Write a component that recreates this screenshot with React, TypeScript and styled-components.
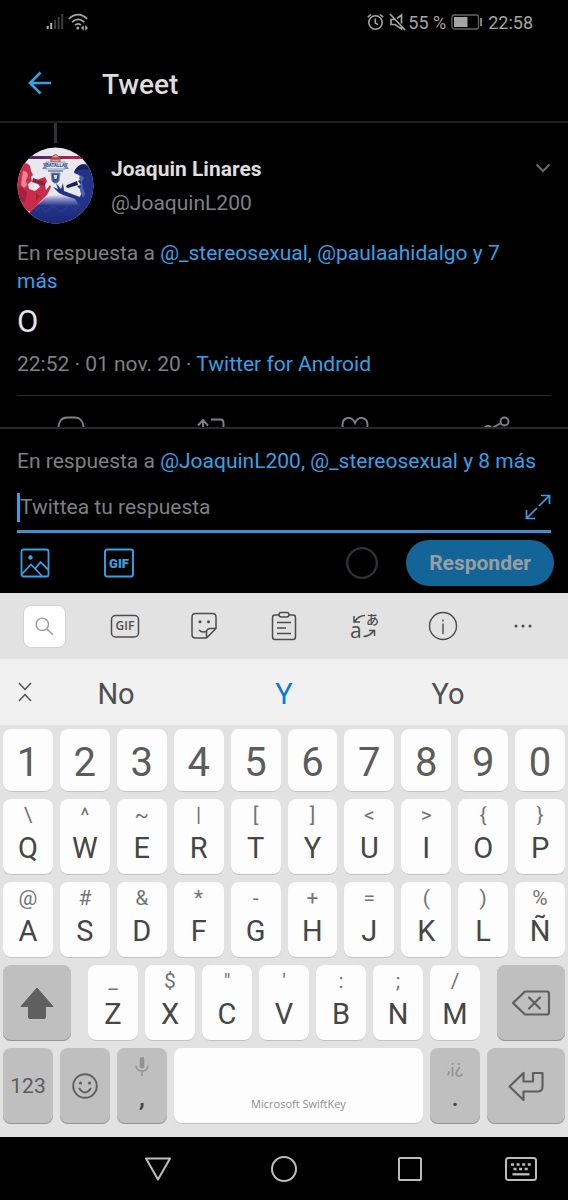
import React from "react";
import styled, { createGlobalStyle } from "styled-components";

const BLUE = "#35a1e8";
const GREY = "#7d8084";
const KEY_INK = "#5c5c5c";

const GlobalStyle = createGlobalStyle`
  * { box-sizing: border-box; }
  body { margin: 0; background: #000; font-family: Roboto, "Noto Sans CJK JP", sans-serif; }
  button { border: 0; padding: 0; background: none; font: inherit; color: inherit; display: flex; align-items: center; justify-content: center; }
  svg { display: block; flex: none; }
  h1, h2, p { margin: 0; }
`;

const Screen = styled.div`
  display: flex;
  flex-direction: column;
  min-height: 100vh;
  background: #000;
`;

const StatusBar = styled.header`
  display: flex;
  align-items: center;
  height: 44px;
  padding: 0 35px 0 46px;
  color: #a4a4a4;
  font-size: 18px;
`;
const StatusLeft = styled.div`
  display: flex;
  gap: 4px;
  margin-right: auto;
`;
const StatusRight = styled.div`
  display: flex;
  align-items: center;
  gap: 5px;
`;
const Percent = styled.span`
  margin-left: -3px;
`;

const AppBar = styled.div`
  display: flex;
  align-items: center;
  height: 79px;
  padding: 0 26px;
  gap: 48px;
  border-bottom: 2px solid #1d1f20;
`;
const Title = styled.h1`
  padding-top: 4px;
  font-size: 28px;
  font-weight: 500;
  line-height: 36px;
  color: #dcdcdc;
`;

const Thread = styled.main`
  flex: 1 1 304px;
  height: 304px;
  overflow: hidden;
  display: flex;
  flex-direction: column;
  padding: 0 17px;
  & > * { flex-shrink: 0; }
`;
const ThreadLine = styled.div`
  width: 3px;
  height: 20px;
  margin: 0 0 4px 37px;
  background: #303336;
`;
const Author = styled.div`
  display: flex;
  height: 76px;
  gap: 17px;
`;
const AuthorNames = styled.div`
  flex: 1;
  padding-top: 4px;
`;
const Name = styled.h2`
  font-size: 21px;
  font-weight: 700;
  line-height: 36px;
  color: #dedede;
`;
const Handle = styled.p`
  font-size: 21px;
  line-height: 32px;
  color: ${GREY};
`;
const MoreButton = styled.button`
  align-self: flex-start;
  height: 42px;
`;
const Meta = styled.p`
  font-size: 21px;
  line-height: 28px;
  color: ${GREY};
`;
const ReplyingTo = styled(Meta)`
  margin-top: 16px;
  padding-right: 24px;
`;
const Link = styled.a`
  color: ${BLUE};
  text-decoration: none;
`;
const TweetText = styled.p`
  margin: 6px 0 7px;
  font-size: 31px;
  line-height: 42px;
  color: #e4e4e4;
`;
const Actions = styled.div`
  display: grid;
  grid-template-columns: repeat(4, 1fr);
  margin: 0 -17px;
  padding-top: 19px;
`;
const Rule = styled.hr`
  width: 100%;
  margin: 17px 0 0;
  border: 0;
  border-top: 1px solid #2b2d2e;
`;

const Composer = styled.form`
  padding: 18px 17px 0;
  border-top: 2px solid #27292b;
  background: #000;
`;
const InputRow = styled.div`
  display: flex;
  align-items: center;
  height: 54px;
  margin-top: 4px;
  padding-top: 5px;
  border-bottom: 3px solid #3f8fd0;
`;
const Caret = styled.span`
  width: 3px;
  height: 29px;
  background: ${BLUE};
`;
const ReplyInput = styled.input`
  flex: 1;
  min-width: 0;
  padding: 0;
  border: 0;
  outline: 0;
  background: none;
  color: #e4e4e4;
  font: 21px/28px Roboto, sans-serif;
  &::placeholder { color: ${GREY}; opacity: 1; }
`;
const ComposerTools = styled.div`
  display: flex;
  align-items: center;
  height: 60px;
  padding-left: 3px;
`;
const ToolButton = styled.button<{ $after: number }>`
  margin-right: ${(p) => p.$after}px;
`;
const Spacer = styled.span`
  flex: 1;
`;
const SubmitButton = styled.button`
  && {
    height: 46px;
    margin: 0 -3px 0 28px;
    padding: 0 23px;
    border-radius: 23px;
    background: #136497;
    color: #979fa5;
    font-size: 21px;
    font-weight: 700;
  }
`;

const Keyboard = styled.section`
  background: #e2e2e2;
  padding-bottom: 13px;
`;
const KeyboardTools = styled.div`
  display: grid;
  grid-template-columns: repeat(7, 1fr);
  height: 66px;
  padding: 0 5px;
  color: #4c4c4c;
`;
const SearchBox = styled.span`
  display: flex;
  align-items: center;
  justify-content: center;
  width: 43px;
  height: 43px;
  border: 1px solid #d2d2d2;
  border-radius: 8px;
  background: #fff;
`;
const Suggestions = styled.div`
  display: grid;
  grid-template-columns: 32px 168fr 168fr 160fr 40px;
  height: 66px;
  background: #f1f1f1;
`;
const Suggestion = styled.button<{ $active?: boolean }>`
  && {
    font-size: 29px;
    color: ${(p) => (p.$active ? "#0a78dc" : "#505050")};
    padding-top: 3px;
  }
`;
const CollapseButton = styled.button`
  && { padding-left: 17px; }
`;

const Keys = styled.div`
  display: grid;
  gap: 7px;
  padding: 4px 3px 0;
`;
const KeyRow = styled.div<{ $columns?: string; $height?: number }>`
  display: grid;
  grid-template-columns: ${(p) => p.$columns ?? "repeat(10, minmax(0, 1fr))"};
  column-gap: 7px;
  height: ${(p) => p.$height ?? 76}px;
`;
const Key = styled.button<{ $dark?: boolean }>`
  && {
    flex-direction: column;
    justify-content: ${(p) => (p.$dark ? "center" : "flex-start")};
    min-width: 0;
    border-radius: 8px;
    background: ${(p) => (p.$dark ? "#bfbfbf" : "#fdfdfd")};
    box-shadow: inset 0 -1px 0 ${(p) => (p.$dark ? "#949494" : "#c2c2c2")};
    color: ${KEY_INK};
    font-size: 21px;
  }
`;
const DigitKey = styled(Key)`
  && {
    justify-content: center;
    padding-top: 3px;
    font-size: 40px;
  }
`;
const Hint = styled.span`
  font-size: 21px;
  line-height: 32px;
  color: #757575;
`;
const Letter = styled.span`
  font-size: 29px;
  line-height: 34px;
  color: #464646;
`;
const StackKey = styled(Key)`
  && { justify-content: flex-start; }
`;
const SoftHint = styled.span`
  display: flex;
  align-items: center;
  justify-content: center;
  height: 36px;
  font-size: 18px;
  color: #929292;
`;
const Punctuation = styled.span`
  font-size: 26px;
  font-weight: 500;
  line-height: 26px;
  color: #464646;
`;
const SpaceKey = styled(Key)`
  && {
    justify-content: flex-end;
    padding-bottom: 12px;
    font: 11px/16px "Open Sans", sans-serif;
    color: #8d8d8d;
  }
`;

const NavBar = styled.nav`
  display: grid;
  grid-template-columns: 95fr 126fr 126fr 126fr 95fr;
  height: 63px;
  background: #000;
  button:first-child { grid-column: 2; }
`;

const SignalIcon = () => (
  <svg width="18" height="18" viewBox="0 0 18 18">
    <path d="M1.7 13v3M5.2 10v6" stroke="#b0b0b0" strokeWidth="2" />
    <path d="M9 7v9M12.6 4v12M16.2 1v15" stroke="#3c3c3c" strokeWidth="2" />
  </svg>
);
const WifiIcon = () => (
  <svg width="21" height="18" viewBox="0 0 21 18" fill="none" stroke="#a8a8a8" strokeWidth="1.7">
    <path d="M.8 5.8Q10 -2.5 19.2 5.8M4 9.2Q10 3.8 16.2 9M7 12.2Q10 9.5 13 12" />
    <circle cx="9.8" cy="15" r="1.5" fill="#a8a8a8" stroke="none" />
    <path d="M15.8 12.200 13 15l2.800 2.800zM17.200 12.200l2.800 2.800-2.800 2.800z" fill="#a8a8a8" stroke="none" />
  </svg>
);
const AlarmIcon = () => (
  <svg width="17" height="18" viewBox="0 0 17 18" fill="none" stroke="#a4a4a4" strokeWidth="1.6">
    <circle cx="8.500" cy="9.500" r="6.700" />
    <path d="M8.300 5.500v4.500l2.800 1.600M.8 4.200 4 1.500M16.200 4.200 13 1.500" />
  </svg>
);
const MuteIcon = () => (
  <svg width="17" height="18" viewBox="0 0 17 18" fill="none" stroke="#a4a4a4" strokeWidth="1.700">
    <path d="M1 1 16 17M5.500 6.500H2v5h4l6.500 4.500v-3M8 5.500 12.500 2v8.500" />
  </svg>
);
const BatteryIcon = () => (
  <svg width="32" height="16" viewBox="0 0 32 16">
    <rect x="1" y="1" width="26.500" height="14" rx="2" fill="none" stroke="#666" strokeWidth="1.300" />
    <rect x="3" y="3" width="13.500" height="10" fill="#a4a4a4" />
    <path d="M30 4v8" stroke="#8c8c8c" strokeWidth="1.800" />
  </svg>
);
const BackIcon = () => (
  <svg width="28" height="24" viewBox="0 0 28 24" fill="none" stroke={BLUE} strokeWidth="2.600">
    <path d="M25 12H4M14.500 1.500 4 12l10.500 10.500" />
  </svg>
);
const ChevronIcon = () => (
  <svg width="16" height="12" viewBox="0 0 16 12" fill="none" stroke="#64686b" strokeWidth="2.200">
    <path d="m1.500 2.500 6.500 6.500 6.500-6.500" />
  </svg>
);

const Avatar = () => (
  <svg width="77" height="77" viewBox="0 0 77 77" role="img" aria-label="Joaquin Linares">
    <defs>
      <clipPath id="round"><circle cx="38.500" cy="38.500" r="38" /></clipPath>
      <linearGradient id="crowd" x1="0" y1="0" x2="0" y2="1">
        <stop offset="0" stopColor="#e8e8f2" />
        <stop offset=".15" stopColor="#8790c4" />
        <stop offset=".38" stopColor="#263489" />
        <stop offset="1" stopColor="#1b2878" />
      </linearGradient>
      <linearGradient id="band" x1="0" y1="0" x2="1" y2="0">
        <stop offset=".15" stopColor="#40256f" />
        <stop offset=".8" stopColor="#c31d50" />
      </linearGradient>
    </defs>
    <g clipPath="url(#round)">
      <rect width="77" height="77" fill="#e9e8ec" />
      <rect y="9" width="77" height="3" fill="url(#band)" />
      <path d="M12 66 28 51Q40 45 56 50l21 6v21H0V66z" fill="url(#crowd)" />
      <path d="M0 26 5 18q5-4 8 1l1 5 2 4-2 2 1 4-4 3 1 5 6 2 5-4-3-5 2-3 6-2 2 4-2 4 1 5 4-5 1 2-4 8-7 7-9 10L0 60z" fill="#c92c4b" />
      <path d="M6 24q5 0 5 5l-2 4 1 5-3 3-3-3z" fill="#e98593" />
      <path d="M3 38 10 45 8 56 0 52zM19 46l4 3-4 5z" fill="#a8203f" />
      <path d="m16 31 9 3 3 1v4l-4-1-9-3z" fill="#8d213e" />
      <path d="M57 26q2-7 8-9 9-1 12 8v45l-13-9-6-9-12-4-4-2-6-6 5 2-2-6 5 6 2-6 1 8 8 3 8 3 2-6-5-5 4-1-3-4 3-2-2-4z" fill="#223489" />
      <path d="m50 38 10-4 1 4-10 3-2-1z" fill="#1a2256" />
      <path d="m64 28 3 3-2 4 1 6 2 6-2 4-3-7 1-9-2-4z" fill="#5261a8" />
      <path d="M57 25q3-7 10-7 4 1 5 5-7-2-15 2z" fill="#162155" />
      <path d="M34 12q4.500-9 9 0v3h-9z" fill="#d6ab84" stroke="#a8444d" strokeWidth="1" />
      <path d="M35 11.500h7" stroke="#b92b40" strokeWidth="2" />
      <path d="M26 16h4l-1 6h-4l2-3zM47 16h4l-1 3 2 3h-4z" fill="#7787ad" />
      <path d="M29 15h19v7H29z" fill="#dfe4ef" stroke="#6c80ab" strokeWidth=".7" />
      <text x="38.500" y="20" textAnchor="middle" fontFamily="Roboto, sans-serif" fontSize="4.500" fontWeight="700" fill="#304a82">BATALLA</text>
      <path d="M31 24h15" stroke="#6b7ba6" strokeWidth="1.500" />
      <path d="M34 26h9l-1 8-2 2h-3l-2-2z" fill="#34518b" stroke="#8492b3" strokeWidth="1" />
      <path d="M36.500 28h4l-1 4h-2z" fill="#c7d2e8" />
      <path d="m18 64 6-4 5 5 7-6 8 6 8-7 8 6" fill="none" stroke="#35489a" strokeWidth="1.500" opacity=".4" />
    </g>
  </svg>
);

const ActionCell = styled.button`
  height: 30px;
`;
const actionPaths: Record<string, React.ReactNode> = {
  Responder: <path d="M3.500 13C3.500 7 6.500 2.500 12 2.500h8c5.500 0 8.500 4.500 8.500 10.500s-6 10-12.500 14v-4C7.500 23 3.500 19 3.500 13z" />,
  Retwittear: <path d="M6 22V5M1 10.500l5-5.500 5 5.500M14 4.500h9q3.500 0 3.500 3.500V22M22 18l5 5 5-5" />,
  "Me gusta": <path d="M16 27C8 21 3.500 15 3.500 10c0-8 9-10 12.500-2 3.500-8 12.500-6 12.500 2 0 5-4.500 11-12.500 17z" />,
  Compartir: (
    <>
      <circle cx="23.500" cy="6.500" r="4" />
      <circle cx="7" cy="15" r="4" />
      <circle cx="23.500" cy="23.500" r="4" />
      <path d="m19.500 8.500-8.500 4.500M11 17l9 5" />
    </>
  ),
};

const ImageIcon = () => (
  <svg width="30" height="30" viewBox="0 0 30 30" fill="none" stroke={BLUE} strokeWidth="1.800">
    <rect x="1.500" y="1.500" width="27" height="27" rx="2" />
    <path d="M2 26 11 16.500 22 28M15 21l5.500-7 8 8" />
    <circle cx="10.500" cy="9.500" r="2.200" fill={BLUE} stroke="none" />
  </svg>
);
const GifIcon = ({ bold }: { bold?: boolean }) => (
  <svg width="30" height="30" viewBox="0 0 30 30" fill="none">
    {bold ? (
      <rect x="1" y="1.500" width="28" height="27" rx="2" stroke={BLUE} strokeWidth="1.900" />
    ) : (
      <rect x="1.500" y="4.500" width="27" height="21.500" rx="4" stroke="#4c4c4c" strokeWidth="1.500" />
    )}
    <text
      x="15"
      y={bold ? 20 : 19}
      textAnchor="middle"
      fontFamily={bold ? "Roboto, sans-serif" : "Open Sans, sans-serif"}
      fontSize={bold ? 13 : 12}
      fontWeight={bold ? 900 : 600}
      fill={bold ? BLUE : "#4c4c4c"}
    >
      GIF
    </text>
  </svg>
);
const ExpandIcon = () => (
  <svg width="26" height="26" viewBox="0 0 26 26" fill="none" stroke={BLUE} strokeWidth="1.700">
    <path d="M14 12 24 2M16 1.500h8.500V10M12 14 2 24M1.500 16v8.500H10" />
  </svg>
);
const CountRing = () => (
  <svg width="32" height="32" viewBox="0 0 32 32">
    <circle cx="16" cy="16" r="14.800" fill="none" stroke="#303336" strokeWidth="2.300" />
  </svg>
);

const SearchIcon = () => (
  <svg width="19" height="19" viewBox="0 0 19 19" fill="none" stroke="#9b9b9b" strokeWidth="1.400">
    <circle cx="7.300" cy="7.300" r="6.200" />
    <path d="m12 12 6 6" />
  </svg>
);
const StickerIcon = () => (
  <svg width="28" height="28" viewBox="0 0 28 28" fill="none" stroke="#4c4c4c" strokeWidth="1.500">
    <path d="M16.500 26H5.500q-3.500 0-3.500-3.500V5Q2 1.500 5.500 1.500h17q3.500 0 3.500 3.500v11.500zM16.500 26v-5.500q0-4 4-4H26M9 18q3.500 3.500 8 1" />
    <circle cx="10" cy="9.800" r="1.500" fill="#4c4c4c" stroke="none" />
    <circle cx="18.500" cy="9.800" r="1.500" fill="#4c4c4c" stroke="none" />
  </svg>
);
const ClipboardIcon = () => (
  <svg width="26" height="30" viewBox="0 0 26 30" fill="none" stroke="#4c4c4c" strokeWidth="1.500">
    <path d="M8 4H4Q1.500 4 1.500 6.500v19Q1.500 28.500 4 28.500h18q2.500 0 2.500-3v-19Q24.500 4 22 4h-4" />
    <rect x="8" y="1.500" width="10" height="4.500" rx="2.200" />
    <path d="M6 11.500h14M6 17h9M6 22.500h14" />
  </svg>
);
const TranslateIcon = () => (
  <svg width="40" height="40" viewBox="0 0 40 40" fill="none" stroke="#4c4c4c" strokeWidth="1.500">
    <text x="6" y="32" fontFamily="Open Sans, sans-serif" fontSize="21" fill="#4c4c4c" stroke="none">a</text>
    <text x="22" y="18" fontFamily="Noto Sans CJK JP, sans-serif" fontSize="13" fontWeight="500" fill="#4c4c4c" stroke="none">あ</text>
    <path d="M21 9.500q-6 0-10.500 6M10 10v6h6M19.500 30.500q6 0 10.500-6M25 24.500h5.500V30" />
  </svg>
);
const InfoIcon = () => (
  <svg width="30" height="30" viewBox="0 0 30 30" fill="none" stroke="#4c4c4c" strokeWidth="1.400">
    <circle cx="15" cy="15" r="13.500" />
    <path d="M15 12.500V23M15 8.500v2" />
  </svg>
);
const MoreIcon = () => (
  <svg width="20" height="6" viewBox="0 0 20 6" fill="#4c4c4c">
    <circle cx="3" cy="3" r="1.500" />
    <circle cx="10" cy="3" r="1.500" />
    <circle cx="17" cy="3" r="1.500" />
  </svg>
);
const CollapseIcon = () => (
  <svg width="14" height="20" viewBox="0 0 14 20" fill="none" stroke="#4c4c4c" strokeWidth="1.400">
    <path d="m1 1 6 6.500L13 1M1 19l6-6.500 6 6.500" />
  </svg>
);
const ShiftIcon = () => (
  <svg width="36" height="34" viewBox="0 0 36 34">
    <path d="M18 2 34 20.500h-7.500V31q0 1.500-1.500 1.500H11Q9.500 32.500 9.500 31V20.500H2z" fill="#5f5f5f" stroke="#5f5f5f" strokeLinejoin="round" />
  </svg>
);
const BackspaceIcon = () => (
  <svg width="40" height="26" viewBox="0 0 40 26" fill="none" stroke="#5f5f5f" strokeWidth="2.200" strokeLinejoin="round" strokeLinecap="round">
    <path d="M2 13 14 1.500h22q2 0 2 2v19q0 2-2 2H14zM18 7.500 29 18.500M29 7.500 18 18.500" />
  </svg>
);
const EnterIcon = () => (
  <svg width="36" height="30" viewBox="0 0 36 30" fill="none" stroke="#5f5f5f" strokeWidth="2.200" strokeLinejoin="round">
    <path d="M1.500 15.500 15.500 2v8.500H25V2h9.500v13.500q0 5-5 5h-14V29z" />
  </svg>
);
const SmileIcon = () => (
  <svg width="26" height="26" viewBox="0 0 26 26" fill="none" stroke="#5f5f5f" strokeWidth="1.900">
    <circle cx="13" cy="13" r="11.800" />
    <path d="M7 15q6 9 12 0" />
    <circle cx="8.500" cy="10" r="1.600" fill="#5f5f5f" stroke="none" />
    <circle cx="17.500" cy="10" r="1.600" fill="#5f5f5f" stroke="none" />
  </svg>
);
const MicIcon = () => (
  <svg width="14" height="20" viewBox="0 0 14 20" fill="none" stroke="#929292" strokeWidth="1.500">
    <rect x="4.700" y="1" width="4.600" height="11.500" rx="2.300" fill="#929292" stroke="none" />
    <path d="M1.200 9.500q0 5.500 5.800 5.500t5.800-5.500M7 15v5" />
  </svg>
);
const navStroke = { fill: "none", stroke: "#bcbcbc", strokeWidth: 2 };
const NavKeyboardIcon = () => (
  <svg width="32" height="24" viewBox="0 0 32 24">
    <rect x="1" y="1" width="30" height="22" rx="2.500" {...navStroke} />
    <path d="M6 7.500h20" stroke="#bcbcbc" strokeWidth="2.300" strokeDasharray="3 2.600" />
    <path d="M8.500 12h15" stroke="#bcbcbc" strokeWidth="2.300" strokeDasharray="3 2.600" />
    <path d="M7.500 17.300h17" stroke="#bcbcbc" strokeWidth="2.300" />
  </svg>
);

const digits = ["1", "2", "3", "4", "5", "6", "7", "8", "9", "0"];
const topRow = ["\\Q", "^W", "~E", "|R", "[T", "]Y", "<U", ">I", "{O", "}P"];
const homeRow = ["@A", "#S", "&D", "*F", "-G", "+H", "=J", "(K", ")L", "%Ñ"];
const lowerRow = ["_Z", "$X", '"C', "'V", ":B", ";N", "/M"];

const LetterKeys = ({ keys }: { keys: string[] }) => (
  <>
    {keys.map((k) => (
      <Key type="button" key={k}>
        <Hint>{k[0]}</Hint>
        <Letter>{k[1]}</Letter>
      </Key>
    ))}
  </>
);

export default function App() {
  return (
    <Screen>
      <GlobalStyle />
      <StatusBar>
        <StatusLeft>
          <SignalIcon />
          <WifiIcon />
        </StatusLeft>
        <StatusRight>
          <AlarmIcon />
          <MuteIcon />
          <Percent>55 %</Percent>
          <BatteryIcon />
          <span>22:58</span>
        </StatusRight>
      </StatusBar>
      <AppBar>
        <button type="button" aria-label="Atrás"><BackIcon /></button>
        <Title>Tweet</Title>
      </AppBar>

      <Thread>
        <ThreadLine />
        <Author>
          <Avatar />
          <AuthorNames>
            <Name>Joaquin Linares</Name>
            <Handle>@JoaquinL200</Handle>
          </AuthorNames>
          <MoreButton type="button" aria-label="Más opciones"><ChevronIcon /></MoreButton>
        </Author>
        <ReplyingTo>
          En respuesta a <Link href="#">@_stereosexual, @paulaahidalgo y 7 más</Link>
        </ReplyingTo>
        <TweetText>O</TweetText>
        <Meta>
          22:52 · 01 nov. 20 · <Link href="#">Twitter for Android</Link>
        </Meta>
        <Rule />
        <Actions>
          {Object.entries(actionPaths).map(([label, art]) => (
            <ActionCell type="button" aria-label={label} key={label}>
              <svg width="32" height="30" viewBox="0 0 32 30" fill="none" stroke="#7d8084" strokeWidth="1.900">{art}</svg>
            </ActionCell>
          ))}
        </Actions>
      </Thread>

      <Composer onSubmit={(e) => e.preventDefault()}>
        <Meta>
          En respuesta a <Link href="#">@JoaquinL200, @_stereosexual y 8 más</Link>
        </Meta>
        <InputRow>
          <Caret />
          <ReplyInput aria-label="Twittea tu respuesta" placeholder="Twittea tu respuesta" />
          <button type="button" aria-label="Expandir"><ExpandIcon /></button>
        </InputRow>
        <ComposerTools>
          <ToolButton type="button" aria-label="Imagen" $after={54}><ImageIcon /></ToolButton>
          <ToolButton type="button" aria-label="Añadir GIF" $after={0}><GifIcon bold /></ToolButton>
          <Spacer />
          <CountRing />
          <SubmitButton type="submit">Responder</SubmitButton>
        </ComposerTools>
      </Composer>

      <Keyboard aria-label="Teclado">
        <KeyboardTools>
          <button type="button" aria-label="Buscar"><SearchBox><SearchIcon /></SearchBox></button>
          <button type="button" aria-label="GIF"><GifIcon /></button>
          <button type="button" aria-label="Stickers"><StickerIcon /></button>
          <button type="button" aria-label="Portapapeles"><ClipboardIcon /></button>
          <button type="button" aria-label="Traducir"><TranslateIcon /></button>
          <button type="button" aria-label="Información"><InfoIcon /></button>
          <button type="button" aria-label="Más"><MoreIcon /></button>
        </KeyboardTools>
        <Suggestions>
          <CollapseButton type="button" aria-label="Contraer"><CollapseIcon /></CollapseButton>
          <Suggestion type="button">No</Suggestion>
          <Suggestion type="button" $active>Y</Suggestion>
          <Suggestion type="button">Yo</Suggestion>
        </Suggestions>
        <Keys>
          <KeyRow $height={63}>
            {digits.map((d) => <DigitKey type="button" key={d}>{d}</DigitKey>)}
          </KeyRow>
          <KeyRow><LetterKeys keys={topRow} /></KeyRow>
          <KeyRow><LetterKeys keys={homeRow} /></KeyRow>
          <KeyRow $columns="68fr 3fr repeat(7, minmax(0, 50fr)) 3fr 68fr">
            <Key type="button" $dark aria-label="Mayúsculas"><ShiftIcon /></Key>
            <span />
            <LetterKeys keys={lowerRow} />
            <span />
            <Key type="button" $dark aria-label="Borrar"><BackspaceIcon /></Key>
          </KeyRow>
          <KeyRow $columns="50fr 50fr 50fr 249fr 50fr 78fr">
            <Key type="button" $dark>123</Key>
            <Key type="button" $dark aria-label="Emoji"><SmileIcon /></Key>
            <StackKey type="button" $dark>
              <SoftHint><MicIcon /></SoftHint>
              <Punctuation>,</Punctuation>
            </StackKey>
            <SpaceKey type="button">Microsoft SwiftKey</SpaceKey>
            <StackKey type="button" $dark>
              <SoftHint>,¡¿</SoftHint>
              <Punctuation>.</Punctuation>
            </StackKey>
            <Key type="button" $dark aria-label="Intro"><EnterIcon /></Key>
          </KeyRow>
        </Keys>
      </Keyboard>

      <NavBar>
        <button type="button" aria-label="Atrás">
          <svg width="28" height="24" viewBox="0 0 28 24" {...navStroke} strokeLinejoin="round"><path d="M2 1.500h24L14 22.500z" /></svg>
        </button>
        <button type="button" aria-label="Inicio">
          <svg width="28" height="28" viewBox="0 0 28 28" {...navStroke}><circle cx="14" cy="14" r="12" /></svg>
        </button>
        <button type="button" aria-label="Recientes">
          <svg width="24" height="24" viewBox="0 0 24 24" {...navStroke}><rect x="1" y="1" width="22" height="22" rx="1" /></svg>
        </button>
        <button type="button" aria-label="Cambiar teclado"><NavKeyboardIcon /></button>
      </NavBar>
    </Screen>
  );
}
